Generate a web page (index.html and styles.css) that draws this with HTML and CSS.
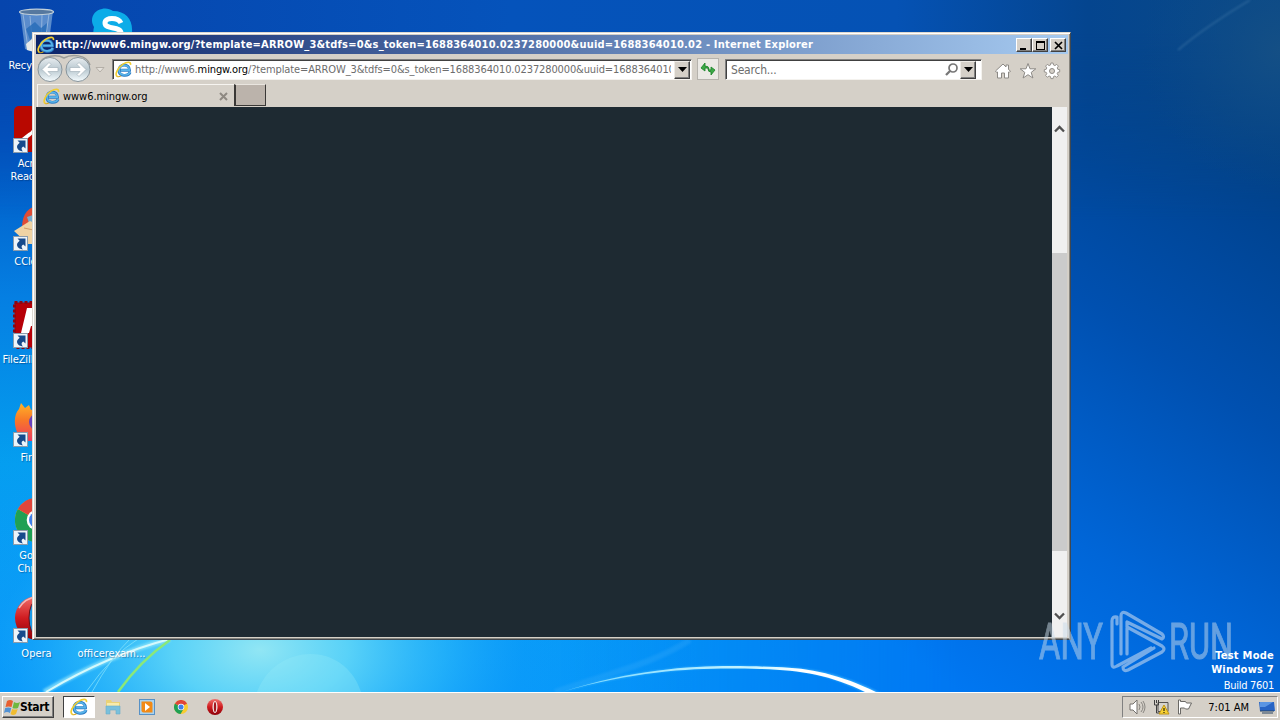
FILE: index.html
```html
<!DOCTYPE html>
<html lang="en">
<head>
    <meta charset="UTF-8">
    <meta name="viewport" content="width=device-width, initial-scale=1.0">
    <title>www6.mingw.org - Internet Explorer</title>
    <link rel="stylesheet" href="styles.css">
</head>
<body>
    <!-- shared icons -->
    <svg class="defs" width="0" height="0">
      <defs>
        <linearGradient id="ieBlue" x1="0" y1="0" x2="0" y2="1">
          <stop offset="0" stop-color="#7cd4f8"/><stop offset="1" stop-color="#1c78cc"/>
        </linearGradient>
        <linearGradient id="operaRed" x1="0" y1="0" x2="0" y2="1">
          <stop offset="0" stop-color="#f0706c"/><stop offset="0.5" stop-color="#d01c20"/><stop offset="1" stop-color="#8c0008"/>
        </linearGradient>
        <linearGradient id="round" x1="0" y1="0" x2="0" y2="1">
          <stop offset="0" stop-color="#e8edf0"/><stop offset="0.5" stop-color="#b9c8d0"/><stop offset="1" stop-color="#f6fdff"/>
        </linearGradient>
        <symbol id="ie" viewBox="0 0 16 16">
          <path d="M14.200 10.600C12.800 14.600 3.800 15 3.600 8.600 3.800 2.200 13.700 2.200 13.700 8.700H5" fill="none" stroke="#2c7cc4" stroke-width="2.700"/>
          <path d="M14 10.600C12.500 14.300 4 14.400 3.800 8.600 4 2.600 13.500 2.600 13.500 8.600H5.500" fill="none" stroke="#58b4ea" stroke-width="1.500"/>
          <path d="M2.400 14.700C-1 13.500 2.300 6.500 7.500 3 11 .8 15.300.2 14.600 3.600" fill="none" stroke="#f1cd30" stroke-width="1.500"/>
          <path d="M2.200 14.700c1.200.4 2.400 0 3.500-.7" fill="none" stroke="#d8a818" stroke-width="1"/>
        </symbol>
        <symbol id="shortcut" viewBox="0 0 15 15">
          <rect x=".5" y=".5" width="14" height="14" fill="#edf4fa" stroke="#8b9cac"/>
          <path d="M4.500 2.500h8v8L10.300 8.400C8 9.300 8.300 11.500 10 13.500 4.500 13 1.500 8.500 6.700 4.800z" fill="#164a8c"/>
        </symbol>
        <symbol id="chrome" viewBox="0 0 32 32">
          <circle cx="16" cy="16" r="16" fill="#f8cc30"/>
          <path d="M16 16L2.100 8A16 16 0 0 0 15 32l7-12z" fill="#20a054"/>
          <path d="M16 16L2.100 8A16 16 0 0 1 29.900 8z" fill="#e0453a"/>
          <circle cx="16" cy="16" r="7.500" fill="#fff"/>
          <circle cx="16" cy="16" r="5.800" fill="#4080ea"/>
        </symbol>
        <symbol id="opera" viewBox="0 0 32 32">
          <circle cx="16" cy="16" r="16" fill="url(#operaRed)"/>
          <ellipse cx="16" cy="16" rx="5" ry="12" fill="#f4eeee"/>
        </symbol>
      </defs>
    </svg>

    <div class="desktop">
      <svg class="wallpaper" viewBox="0 0 1280 692" preserveAspectRatio="none">
        <defs>
          <linearGradient id="sky" x1="0" y1="0" x2="0" y2="1">
            <stop offset="0" stop-color="#0645ad"/><stop offset=".2" stop-color="#0058c4"/>
            <stop offset=".43" stop-color="#057fe2"/><stop offset=".67" stop-color="#049eef"/>
            <stop offset="1" stop-color="#0598fa"/>
          </linearGradient>
          <linearGradient id="right" gradientUnits="userSpaceOnUse" x1="900" y1="650" x2="1262" y2="130">
            <stop offset="0" stop-color="#0077f2"/><stop offset=".3" stop-color="#0066d8"/>
            <stop offset=".62" stop-color="#0050b0"/><stop offset="1" stop-color="#003f86"/>
          </linearGradient>
          <linearGradient id="top" gradientUnits="userSpaceOnUse" x1="0" y1="0" x2="1280" y2="0">
            <stop offset="0" stop-color="#0645ad"/><stop offset=".4" stop-color="#0553bb"/>
            <stop offset=".7" stop-color="#0552b4"/><stop offset=".85" stop-color="#04458f"/>
            <stop offset="1" stop-color="#0b4a85"/>
          </linearGradient>
          <linearGradient id="topFade" x1="0" y1="0" x2="0" y2="1">
            <stop offset="0" stop-color="#fff"/><stop offset=".15" stop-color="#fff"/><stop offset="1" stop-color="#fff" stop-opacity="0"/>
          </linearGradient>
          <linearGradient id="fade" x1="0" y1="0" x2="1" y2="0">
            <stop offset="0" stop-color="#fff" stop-opacity="0"/><stop offset=".55" stop-color="#fff"/>
          </linearGradient>
          <mask id="rightMask"><rect x="560" width="720" height="692" fill="url(#fade)"/></mask>
          <mask id="topMask"><rect width="1280" height="220" fill="url(#topFade)"/></mask>
          <radialGradient id="glow" gradientUnits="userSpaceOnUse" cx="0" cy="0" r="1" gradientTransform="translate(260 650) scale(440 270)">
            <stop offset="0" stop-color="#91e6f4"/><stop offset=".2" stop-color="#62d8f8" stop-opacity=".9"/>
            <stop offset=".42" stop-color="#33bdfa" stop-opacity=".6"/><stop offset=".6" stop-color="#1aa0fa" stop-opacity=".25"/>
            <stop offset="1" stop-color="#129bfa" stop-opacity="0"/>
          </radialGradient>
          <radialGradient id="corner" gradientUnits="userSpaceOnUse" cx="1280" cy="50" r="140">
            <stop offset="0" stop-color="#144f85"/><stop offset="1" stop-color="#0a488a" stop-opacity="0"/>
          </radialGradient>
          <linearGradient id="arc" x1="0" y1="0" x2="1" y2="0">
            <stop offset="0" stop-color="#75d7ff"/><stop offset=".6" stop-color="#c8f4ff"/><stop offset=".75" stop-color="#fff"/>
          </linearGradient>
          <filter id="soft" x="-20%" y="-20%" width="140%" height="140%"><feGaussianBlur stdDeviation="1.3"/></filter>
        </defs>
        <rect width="1280" height="692" fill="url(#sky)"/>
        <rect width="1280" height="692" fill="url(#right)" mask="url(#rightMask)"/>
        <rect width="1280" height="220" fill="url(#top)" mask="url(#topMask)"/>
        <rect width="1280" height="692" fill="url(#glow)"/>
        <rect x="1120" width="160" height="200" fill="url(#corner)"/>
        <path d="M1178 50Q1205 27 1250 0" fill="none" stroke="#3e75a5" stroke-width="2" opacity=".5" filter="url(#soft)"/>
        <path d="M257 692C275 644 343 639 361 692z" fill="#9cecf8" opacity=".28"/>
        <path d="M555 692C625 669 655 662 690 640" fill="none" stroke="#52b8fb" stroke-width="6" opacity=".2" filter="url(#soft)"/>
        <path d="M44 692Q108 655 170 639" fill="none" stroke="#9ae9fb" stroke-width="5" opacity=".7" filter="url(#soft)"/>
        <path d="M46 692Q108 655 170 639" fill="none" stroke="#d5f9fc" stroke-width="2"/>
        <path d="M86 692Q112 655 138 639M92 692Q112 656 130 639" fill="none" stroke="#8be5fb" stroke-width="1" opacity=".7"/>
        <path d="M118 692Q140 661 170 640" fill="none" stroke="#8be878" stroke-width="2.500"/>
        <path d="M562 692C660 661 732 666 776 667 812 668 840 673 882 694L868 694C831 675 802 669 760 668 710 667 650 667 562 692z" fill="#50c0ff" opacity=".8" filter="url(#soft)"/>
        <path d="M562 692C660 661 732 666 776 667 812 668 842 675 880 694L869 694C834 676 802 670 760 669 710 668 650 667 562 692z" fill="url(#arc)"/>
      </svg>

      <div class="shortcut recycle">
        <svg width="38" height="46" viewBox="0 0 38 46">
          <path d="M2 3l5 38q12 6 23 0l5-38z" fill="#7fa9d8" opacity=".7"/>
          <path d="M5 6l5 34M12 8l3 34M31 6l-5 35M24 7l-1 35" stroke="#c8dbed" opacity=".5"/>
          <path d="M8 21l9-7 6 6 6-5-1 10-8-1-8 8z" fill="#256bb8" opacity=".8"/>
          <ellipse cx="18.500" cy="4" rx="17" ry="2.800" fill="#56789f" stroke="#c2d0da" stroke-width="1.200"/>
          <path d="M8 36l6-5 8 4 7 6q-10 5-20 1z" fill="#e7e9e8"/>
        </svg>
        <span>Recycle Bin</span>
      </div>

      <div class="shortcut skype">
        <svg width="44" height="44" viewBox="0 0 44 44">
          <path d="M12 1c4-1 8 0 11 2 13 0 20 9 19 21 3 7-1 17-10 18H22C8 42 1 31 4 19-1 11 4 2 12 1z" fill="#0cace8"/>
          <path d="M31 15c-3-6-16-6-16 0 0 7 16 3 16 10 0 8-16 7-17 0" fill="none" stroke="#fff" stroke-width="5"/>
        </svg>
        <span>Skype</span>
      </div>

      <div class="shortcut acrobat">
        <svg width="46" height="48" viewBox="0 0 46 48">
          <rect width="46" height="46" rx="5" fill="#b80800"/>
          <path d="M9 33c10-4 17-17 14-23-5 3 2 16 16 15-10-4-21 0-30 8z" fill="none" stroke="#fff" stroke-width="3"/>
        </svg>
        <svg class="arrow" width="15" height="15"><use href="#shortcut"/></svg>
        <span>Acrobat<br>Reader DC</span>
      </div>

      <div class="shortcut ccleaner">
        <svg width="46" height="44" viewBox="0 0 46 44">
          <path d="M8 24C8 9 15 2 26 2l16 15-20 8z" fill="#df4c36"/>
          <path d="M13 13l12-4 10 14-17 5z" fill="#75acd3"/>
          <path d="M0 27l16-10 21 9-1 14H14z" fill="#efd3a4"/>
          <path d="M10 24l14 3" fill="none" stroke="#cf9c69"/>
        </svg>
        <svg class="arrow" width="15" height="15"><use href="#shortcut"/></svg>
        <span>CCleaner</span>
      </div>

      <div class="shortcut filezilla">
        <svg width="48" height="48" viewBox="0 0 48 48">
          <rect x="1.500" y="1.500" width="45" height="45" fill="#b60008" stroke="#8d0610" stroke-width="3" stroke-dasharray="3 2"/>
          <path d="M8 32L14 7h24v6H21l-2 7h10v5H18l-2 7z" fill="#fff"/>
        </svg>
        <svg class="arrow" width="15" height="15"><use href="#shortcut"/></svg>
        <span>FileZilla Client</span>
      </div>

      <div class="shortcut firefox">
        <svg width="46" height="44" viewBox="0 0 46 44">
          <defs>
            <linearGradient id="fox" x1="0" y1="0" x2="0" y2="1">
              <stop offset="0" stop-color="#ffb428"/><stop offset=".45" stop-color="#f87828"/><stop offset="1" stop-color="#ec3a60"/>
            </linearGradient>
          </defs>
          <path d="M3 32C-1 22 1 13 5 9l2-6 4 5 4-3 2 5 9-3 17 14-4 20H10z" fill="url(#fox)"/>
          <circle cx="24" cy="22" r="9" fill="#6742be"/>
        </svg>
        <svg class="arrow" width="15" height="15"><use href="#shortcut"/></svg>
        <span>Firefox</span>
      </div>

      <div class="shortcut chrome">
        <svg width="44" height="44"><use href="#chrome"/></svg>
        <svg class="arrow" width="15" height="15"><use href="#shortcut"/></svg>
        <span>Google<br>Chrome</span>
      </div>

      <div class="shortcut opera">
        <svg width="44" height="44" viewBox="0 0 44 44">
          <circle cx="22" cy="22" r="22" fill="url(#operaRed)"/>
          <path d="M4 12Q10 2 22 1" fill="none" stroke="#f8d0d0" stroke-width="1.500" opacity=".8"/>
          <ellipse cx="22" cy="22" rx="8" ry="18" fill="#1a9ae8" stroke="#700c14"/>
        </svg>
        <svg class="arrow" width="15" height="15"><use href="#shortcut"/></svg>
        <span>Opera</span>
      </div>
      <div class="shortcut office"><span>officerexam...</span></div>

      <div class="window">
        <div class="titlebar">
          <svg width="18" height="18"><use href="#ie"/></svg>
          <span class="caption">http://www6.mingw.org/?template=ARROW_3&amp;tdfs=0&amp;s_token=1688364010.0237280000&amp;uuid=1688364010.02 - Internet Explorer</span>
          <div class="controls">
            <button><svg width="13" height="11"><path d="M2 8h6v2H2z"/></svg></button>
            <button><svg width="13" height="11"><path d="M2 1h9v9H2zM3 3v6h7V3z" fill-rule="evenodd"/></svg></button>
            <button class="close"><svg width="13" height="11"><path d="M3 2l7 7M10 2L3 9" stroke="#000" stroke-width="1.700"/></svg></button>
          </div>
        </div>

        <div class="navbar">
          <svg class="history" width="76" height="30" viewBox="0 0 76 30">
            <path d="M4 11C7 1 22 0 29 4 36 0 52 0 55 11" fill="none" stroke="#9b9c99" stroke-width="1.500"/>
            <circle cx="15" cy="15.500" r="12" fill="url(#round)" stroke="#88949b"/>
            <circle cx="43" cy="15.500" r="12" fill="url(#round)" stroke="#88949b"/>
            <path d="M7 15.500l7-7 2 2-3 3h10v4H13l3 3-2 2zM51 15.500l-7-7-2 2 3 3H35v4h10l-3 3 2 2z" fill="#fff" stroke="#a5b3bc" stroke-width=".7"/>
            <path d="M61 13.500h8l-4 4.500z" fill="#e6e2dc" stroke="#aaa49d" stroke-width=".8"/>
          </svg>
          <div class="field address">
            <svg width="17" height="17"><use href="#ie"/></svg>
            <span class="url">http://www6.<b>mingw.org</b>/?template=ARROW_3&amp;tdfs=0&amp;s_token=1688364010.0237280000&amp;uuid=1688364010</span>
            <button class="drop"><svg width="9" height="5"><path d="M0 0h9L4.500 5z"/></svg></button>
          </div>
          <button class="refresh">
            <svg width="18" height="18" viewBox="0 0 18 18">
              <path d="M2 8l4-5v3q4 0 4 3Q8 7.500 6 8v3zM16 10l-4 5v-3q-3 0-3-3 1.500 1 3 1V7z" fill="#3ca947" stroke="#188026" stroke-width=".8"/>
            </svg>
          </button>
          <div class="field search">
            <span>Search...</span>
            <svg class="glass" width="15" height="16" viewBox="0 0 15 16"><circle cx="9" cy="6" r="4" fill="none" stroke="#777" stroke-width="1.700"/><path d="M6 9l-4 4" stroke="#777" stroke-width="2.300"/></svg>
            <button class="drop"><svg width="9" height="5"><path d="M0 0h9L4.500 5z"/></svg></button>
          </div>
          <div class="tools">
            <svg width="18" height="18" viewBox="0 0 18 18"><path d="M1.500 9L9 2l3 3V3h2.500v4.500L16.500 9l-1.300 1.500-.7-.5v6h-4v-5h-3v5h-4v-6l-.8.500z" fill="#fff" stroke="#8c8985"/></svg>
            <svg width="18" height="18" viewBox="0 0 18 18"><path d="M9 1.500l2 5.300h5.800l-4.600 3.600 1.700 5.600L9 12.700 4.100 16l1.700-5.600-4.600-3.600H7z" fill="#fff" stroke="#8c8985"/></svg>
            <svg width="18" height="18" viewBox="0 0 18 18"><path d="M7.500 3l.4-2h2.200l.4 2 1.400.6 1.800-1.200 1.700 1.700-1.200 1.800.6 1.400 1.900.4v2.200l-1.900.4-.6 1.400 1.200 1.800-1.700 1.700-1.800-1.200-1.400.6-.4 2H7.900l-.4-2-1.400-.6-1.800 1.200-1.700-1.700 1.200-1.800-.6-1.400-1.900-.4V7.700l1.900-.4.6-1.400-1.200-1.800 1.700-1.700 1.800 1.200z" fill="#fff" stroke="#8c8985" stroke-width=".9"/><circle cx="9" cy="9" r="2.500" fill="#d5d0c8" stroke="#8c8985"/></svg>
          </div>
        </div>

        <div class="tabs">
          <div class="tab">
            <svg width="17" height="17"><use href="#ie"/></svg>
            <span>www6.mingw.org</span>
            <svg class="tab-close" width="9" height="9"><path d="M1 1l7 7M8 1L1 8" stroke="#8e8982" stroke-width="2"/></svg>
          </div>
          <div class="new-tab"></div>
        </div>

        <div class="viewport">
          <div class="page"></div>
          <div class="scrollbar">
            <svg width="11" height="8"><path d="M1 6.500L5.500 2 10 6.500" fill="none" stroke="#505050" stroke-width="2.300"/></svg>
            <div class="thumb"></div>
            <svg width="11" height="8"><path d="M1 1.500L5.500 6 10 1.500" fill="none" stroke="#505050" stroke-width="2.300"/></svg>
          </div>
        </div>
      </div>

      <svg class="watermark" width="200" height="66" viewBox="0 0 200 66">
        <g class="brand">
          <text x="3" y="52" textLength="64" lengthAdjust="spacingAndGlyphs">ANY</text>
          <text x="133" y="52" textLength="64" lengthAdjust="spacingAndGlyphs">RUN</text>
        </g>
        <path class="mark" d="M81 17V10Q76 9 76 14v43q0 5 5 2L115 41M85 47V9q0-5 5-3l36 21q3 3 0 5L91 15v32M91 20l35 19q4 3 0 6L92 63q-5 2-5-3l31-19"/>
      </svg>
      <div class="build"><b>Test Mode</b><b>Windows 7</b><span>Build 7601</span></div>
    </div>

    <div class="taskbar">
      <button class="start">
        <svg width="17" height="17" viewBox="0 0 17 17">
          <path d="M3 2q3-2 6 0L7.500 8q-3-1-6 0z" fill="#e85f30"/>
          <path d="M10 3q3 2 6 0l-2 6q-3 1-5.500 0z" fill="#70b840"/>
          <path d="M1.200 9q3-1 6 0L6 14q-3-2-6 0z" fill="#5292d4"/>
          <path d="M8.200 10q3 1 5.500 0L12 15q-3 2-5.500 0z" fill="#f0bc30"/>
        </svg>
        <span>Start</span>
      </button>
      <div class="pinned active"><svg width="18" height="18"><use href="#ie"/></svg></div>
      <div class="pinned">
        <svg width="16" height="16" viewBox="0 0 16 16"><path d="M1 3V1h5l1 2h8v5H1z" fill="#ead276"/><path d="M2 4h12v4H2z" fill="#f8ebaa"/><path d="M1 7h14v8h-4v-4H5v4H1z" fill="#79c0dc" stroke="#6aaccb" stroke-width=".6"/></svg>
      </div>
      <div class="pinned">
        <svg width="16" height="16" viewBox="0 0 16 16"><rect x=".5" y=".5" width="15" height="15" fill="#a9d2ef" stroke="#5791c6"/><path d="M2.500 2.500h9q2 0 2 2v9h-9q-2 0-2-2z" fill="#f28a16"/><path d="M6 4l5 4-5 4z" fill="#fff"/></svg>
      </div>
      <div class="pinned"><svg width="14" height="14"><use href="#chrome"/></svg></div>
      <div class="pinned"><svg width="16" height="16"><use href="#opera"/><ellipse cx="8" cy="8" rx="1.200" ry="5" fill="#a2161c"/></svg></div>

      <div class="tray">
        <svg width="17" height="16" viewBox="0 0 17 16"><path d="M1 5h3l4-4v14l-4-4H1z" fill="#fff" stroke="#74716d"/><path d="M10 5q2 3 0 6M12 3q4 5 0 10M14 2q4 6 0 12" fill="none" stroke="#898681"/></svg>
        <svg width="17" height="16" viewBox="0 0 17 16"><path d="M5 3.500h10v9H5z" fill="#d6d3cc" stroke="#55524f"/><path d="M1.500 1v5h4V1M3.500 1v3M3.500 6v8H7" fill="none" stroke="#3e3e3e"/><path d="M11 6l5 9H6z" fill="#f8d233" stroke="#c09415"/><path d="M11 9v3M11 13v1" stroke="#000"/></svg>
        <svg width="17" height="16" viewBox="0 0 17 16"><path d="M1.500 1v14h2V9h4l1 1h3l3-6h-5l-1-1.500h-5V1z" fill="#fff" stroke="#6a6865"/></svg>
        <span class="clock">7:01 AM</span>
        <svg width="16" height="13" viewBox="0 0 16 13"><path d="M0 1h15l1 9H1z" fill="#2865c5"/><path d="M1 1h13l-8 5H1z" fill="#5b96e4"/><path d="M1 10h14M3 12h11" stroke="#274263"/></svg>
      </div>
    </div>
</body>
</html>
```
FILE: styles.css
```css
* {
    box-sizing: border-box;
    margin: 0;
    padding: 0;
}

body {
    width: 1280px;
    height: 720px;
    overflow: hidden;
    display: flex;
    flex-direction: column;
    font-family: 'DejaVu Sans Condensed', 'DejaVu Sans', sans-serif;
    font-stretch: condensed;
    font-size: 11px;
    color: #000;
}

svg {
    display: block;
    flex: none;
}

button {
    border: none;
    font: inherit;
}

.defs {
    position: absolute;
}

/* desktop */
.desktop {
    position: relative;
    flex: 1;
    overflow: hidden;
    background: #0582e5;
}

.wallpaper {
    width: 100%;
    height: 100%;
}

.shortcut {
    position: absolute;
    left: -1px;
    width: 75px;
    height: 90px;
    display: flex;
    flex-direction: column;
    align-items: center;
    color: #fff;
    line-height: 13px;
    text-align: center;
    white-space: nowrap;
}

.shortcut span {
    margin-top: auto;
    height: 26px;
    letter-spacing: -0.1px;
    text-shadow: 1px 1px 1px rgba(0, 30, 80, 0.4);
}

.shortcut .arrow {
    position: absolute;
    left: 14px;
    top: 32px;
}

.recycle { top: 8px; height: 77px; }
.skype { top: 8px; left: 74px; }
.acrobat { top: 106px; height: 77px; }
.ccleaner { top: 204px; height: 77px; }
.filezilla { top: 301px; height: 78px; }
.firefox { top: 400px; height: 77px; }
.chrome { top: 498px; height: 77px; }
.opera { top: 596px; height: 77px; }
.opera span,
.office span { letter-spacing: 0; }
.office { top: 596px; height: 77px; left: 74px; }

/* browser window */
.window {
    position: absolute;
    left: 32px;
    top: 32px;
    width: 1039px;
    height: 608px;
    padding: 2px 2px 2px 2px;
    display: flex;
    flex-direction: column;
    background: #d5d0c8;
    border: 1px solid;
    border-color: #ddd9d2 #404850 #404850 #ddd9d2;
    box-shadow: inset 1px 1px #fff, inset -1px -1px #87857f;
}

.titlebar {
    height: 19px;
    margin-left: 1px;
    flex: none;
    display: flex;
    align-items: center;
    padding: 0 2px 0 1px;
    background: linear-gradient(to right, #0b246a, #a6caf0);
}

.caption {
    flex: 1;
    color: #fff;
    font-weight: bold;
    white-space: nowrap;
    letter-spacing: 0.2px;
}

.controls {
    display: flex;
}

.controls button {
    width: 16px;
    height: 14px;
    padding: 1px;
    background: #d5d0c8;
    border: 1px solid;
    border-color: #fff #404040 #404040 #fff;
    box-shadow: inset -1px -1px #808080;
}

.controls .close {
    margin-left: 2px;
}

.navbar {
    height: 30px;
    flex: none;
    display: flex;
    align-items: center;
}

.history {
    margin-right: 1px;
}

.field {
    height: 21px;
    display: flex;
    align-items: center;
    background: #fff;
    border: 1px solid;
    border-color: #808080 #f4f2ee #f4f2ee #808080;
    box-shadow: inset 1px 1px #404040;
    color: #6d6d6d;
}

.address {
    width: 580px;
    padding: 1px 1px 0 2px;
}

.url {
    flex: 1;
    margin: 0 3px;
    overflow: hidden;
    white-space: nowrap;
    letter-spacing: -0.12px;
}

.url b {
    font-weight: normal;
    color: #000;
}

.drop {
    width: 16px;
    height: 18px;
    display: flex;
    align-items: center;
    justify-content: center;
    background: #d5d0c8;
    border: 1px solid;
    border-color: #eeebe6 #404040 #404040 #eeebe6;
    box-shadow: inset -1px -1px #808080;
}

.refresh {
    width: 22px;
    height: 22px;
    margin: 0 6px 0 5px;
    display: flex;
    align-items: center;
    justify-content: center;
    background: #ebe9e5;
    border: 1px solid #b6b3ad;
}

.search {
    width: 257px;
    padding: 1px 5px 0 5px;
}

.search span {
    flex: 1;
    font-size: 12px;
    letter-spacing: -0.2px;
}

.glass {
    margin-right: 1px;
}

.tools {
    display: flex;
    gap: 6.5px;
    margin: 4px 0 0 12px;
}

.tabs {
    height: 23px;
    flex: none;
    display: flex;
    padding-left: 2px;
}

.tab {
    width: 197px;
    display: flex;
    align-items: center;
    padding: 1px 6px 0 5px;
    border-top: 1px solid #f6f4f0;
    border-left: 1px solid #f6f4f0;
}

.tab span {
    flex: 1;
    margin-left: 3px;
    letter-spacing: -0.05px;
}

.new-tab {
    width: 32px;
    height: 22px;
    background: #bbb3ab;
    border: 1px solid;
    border-color: #e9e5df #3a3836 #3a3836;
    border-left-width: 2px;
}

.viewport {
    flex: 1;
    display: flex;
    margin: 0 1px 0 1px;
}

.page {
    flex: 1;
    background: #1e2a32;
}

.scrollbar {
    width: 15px;
    display: flex;
    flex-direction: column;
    align-items: center;
    padding: 18px 0 17px;
    background: #f0f0f0;
}

.thumb {
    width: 15px;
    height: 298px;
    margin-top: 120px;
    margin-bottom: auto;
    background: #cbcbcb;
}

/* overlays */
.watermark {
    position: absolute;
    left: 1036px;
    top: 607px;
}

.brand {
    fill: #c9dbea;
    stroke: #c9dbea;
    stroke-width: 1;
    opacity: 0.5;
    font-family: Roboto, sans-serif;
    font-stretch: normal;
    font-size: 50px;
}

.mark {
    fill: none;
    stroke: #b4d0ee;
    stroke-width: 3.2;
    stroke-linejoin: round;
    stroke-linecap: round;
    opacity: 0.65;
}

.build {
    position: absolute;
    right: 6px;
    top: 649px;
    display: flex;
    flex-direction: column;
    align-items: flex-end;
    color: #fff;
    line-height: 14px;
}

.build b {
    letter-spacing: 0.25px;
}

.build span {
    margin-top: 2px;
    letter-spacing: -0.3px;
}

/* taskbar */
.taskbar {
    height: 28px;
    display: flex;
    align-items: center;
    padding: 1px 2px 0 2px;
    background: #d5d0c8;
    border-top: 1px solid #fff;
}

.start {
    width: 52px;
    height: 22px;
    margin-right: 9px;
    display: flex;
    align-items: center;
    padding-left: 1px;
    background: #d5d0c8;
    border: 1px solid;
    border-color: #fff #404040 #404040 #fff;
    box-shadow: inset -1px -1px #808080;
    font-weight: bold;
    font-size: 12px;
}

.start span {
    margin-left: -1px;
    letter-spacing: -0.3px;
}

.pinned {
    width: 32px;
    height: 22px;
    margin-right: 2px;
    display: flex;
    align-items: center;
    justify-content: center;
}

.pinned.active {
    background: #fff;
    border: 1px solid;
    border-color: #404040 #fff #fff #404040;
}

.tray {
    width: 156px;
    height: 22px;
    margin-left: auto;
    display: flex;
    align-items: center;
    gap: 7px;
    padding: 0 2px 0 6px;
    border: 1px solid;
    border-color: #808080 #fff #fff #808080;
}

.clock {
    flex: 1;
    text-align: right;
    margin-right: 3px;
}
```
